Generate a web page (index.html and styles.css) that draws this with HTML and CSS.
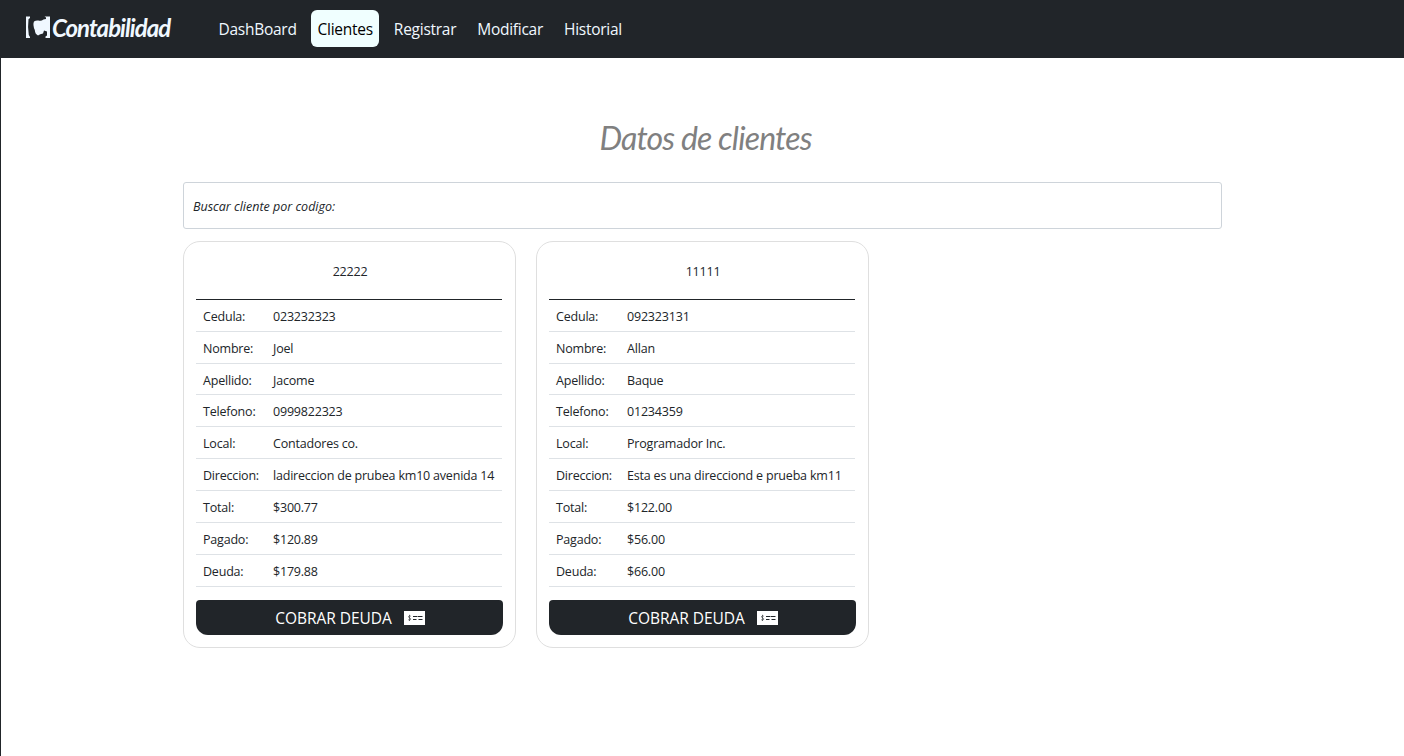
FILE: index.html
```html
<!DOCTYPE html>
<html lang="es">
<head>
<meta charset="utf-8">
<title>Contabilidad</title>
<link rel="stylesheet" href="styles.css">
</head>
<body>
<header class="navbar">
  <a class="brand">
    <svg class="brand-icon" width="26" height="23" viewBox="0 0 26 23" fill="currentColor">
      <path d="M1 .5H5V2L3.500 3.300Q2.500 11 3.800 19L5 21V22H1Z"/>
      <path d="M9 5.500Q11 4 13.500 4.500Q16 5.500 18.500 3.500L21 3V1.500L19.500 .5H25V22H20.500V20.500L22 19.500V15.500L19 14.500L18 17.500Q15 18 13 19.500Q10 18 9.800 14Q7.500 9 9 5.500Z"/>
    </svg>
    <span class="brand-name">Contabilidad</span>
  </a>
  <nav class="nav">
    <a class="nav-link">DashBoard</a>
    <a class="nav-link active">Clientes</a>
    <a class="nav-link">Registrar</a>
    <a class="nav-link">Modificar</a>
    <a class="nav-link">Historial</a>
  </nav>
</header>
<main class="container">
  <h1 class="title">Datos de clientes</h1>
  <div class="search">Buscar cliente por codigo:</div>
  <div class="cards">
    <section class="card">
      <div class="code">22222</div>
      <dl class="rows">
        <div class="row"><dt>Cedula:</dt><dd>023232323</dd></div>
        <div class="row"><dt>Nombre:</dt><dd>Joel</dd></div>
        <div class="row"><dt>Apellido:</dt><dd>Jacome</dd></div>
        <div class="row"><dt>Telefono:</dt><dd>0999822323</dd></div>
        <div class="row"><dt>Local:</dt><dd>Contadores co.</dd></div>
        <div class="row"><dt>Direccion:</dt><dd>ladireccion de prubea km10 avenida 14</dd></div>
        <div class="row"><dt>Total:</dt><dd>$300.77</dd></div>
        <div class="row"><dt>Pagado:</dt><dd>$120.89</dd></div>
        <div class="row"><dt>Deuda:</dt><dd>$179.88</dd></div>
      </dl>
      <button class="pay"><span>COBRAR DEUDA</span>
        <svg width="21" height="14" viewBox="0 0 21 14"><path fill="#fff" d="M0 0H21V14H0Z"/><path d="M6.800 5.200Q5 4.200 4.500 5.500Q4.400 6.500 5.700 6.900Q7 7.500 6.600 8.500Q5.800 9.600 4.200 8.700M5.500 3.800V10" fill="none" stroke="#212529" stroke-width=".6"/><path d="M9 5.500H13.500M14 5.500H18.500M9 8.500H12.500M14.500 8.500H18.500" stroke="#212529"/></svg>
      </button>
    </section>
    <section class="card">
      <div class="code">11111</div>
      <dl class="rows rows-wide">
        <div class="row"><dt>Cedula:</dt><dd>092323131</dd></div>
        <div class="row"><dt>Nombre:</dt><dd>Allan</dd></div>
        <div class="row"><dt>Apellido:</dt><dd>Baque</dd></div>
        <div class="row"><dt>Telefono:</dt><dd>01234359</dd></div>
        <div class="row"><dt>Local:</dt><dd>Programador Inc.</dd></div>
        <div class="row"><dt>Direccion:</dt><dd>Esta es una direcciond e prueba km11</dd></div>
        <div class="row"><dt>Total:</dt><dd>$122.00</dd></div>
        <div class="row"><dt>Pagado:</dt><dd>$56.00</dd></div>
        <div class="row"><dt>Deuda:</dt><dd>$66.00</dd></div>
      </dl>
      <button class="pay"><span>COBRAR DEUDA</span>
        <svg width="21" height="14" viewBox="0 0 21 14"><path fill="#fff" d="M0 0H21V14H0Z"/><path d="M6.800 5.200Q5 4.200 4.500 5.500Q4.400 6.500 5.700 6.900Q7 7.500 6.600 8.500Q5.800 9.600 4.200 8.700M5.500 3.800V10" fill="none" stroke="#212529" stroke-width=".6"/><path d="M9 5.500H13.500M14 5.500H18.500M9 8.500H12.500M14.500 8.500H18.500" stroke="#212529"/></svg>
      </button>
    </section>
  </div>
</main>
</body>
</html>
```
FILE: styles.css
```css
* { box-sizing: border-box; }
body {
  margin: 0;
  height: 756px;
  overflow: hidden;
  border-left: 1px solid #212529;
  background: #fff;
  color: #212529;
  font-family: "Open Sans", "Noto Sans", sans-serif;
}
.navbar {
  display: flex;
  align-items: center;
  height: 58px;
  padding: 0 0 2px 24px;
  background: #212529;
  color: #f0f8ff;
}
.brand { display: flex; align-items: center; width: 187px; }
.brand-icon { flex: none; margin-top: -1px; }
.brand-name {
  font: italic 700 24px/30px Lato, sans-serif;
  letter-spacing: -0.950px;
  white-space: nowrap;
  margin: -1px 0 0 1px;
}
.nav { display: flex; gap: 8px; }
.nav-link {
  height: 37px;
  padding: 0 6.500px;
  border-radius: 6px;
  font-size: 15.500px;
  letter-spacing: -0.270px;
  line-height: 39px;
}
.active { background: #f0ffff; color: #000; }
.container { width: 1039px; margin-left: 182px; }
.title {
  margin: 0;
  padding: 60px 0 0 6px;
  height: 124px;
  text-align: center;
  color: #808080;
  font: italic 400 32px/40px Lato, sans-serif;
  letter-spacing: -0.850px;
}
.search {
  height: 47px;
  padding-left: 9px;
  border: 1px solid #ced4da;
  border-radius: 3px;
  font-size: 12.500px;
  font-style: italic;
  line-height: 47px;
}
.cards { display: flex; gap: 20px; margin-top: 12px; }
.card {
  width: 333px;
  height: 407px;
  padding: 0 12px;
  border: 1px solid #dfdfdf;
  border-radius: 17px;
  font-size: 12.500px;
  letter-spacing: -0.200px;
}
.code {
  width: 306px;
  height: 58px;
  padding: 1px 0 0 2px;
  border-bottom: 1px solid #212529;
  text-align: center;
  line-height: 58px;
}
.rows { width: 306px; margin: 0; }
.row {
  display: grid;
  grid-template-columns: 70px 1fr;
  height: 32px;
  padding-left: 7px;
  border-bottom: 1px solid #dee2e6;
  line-height: 34px;
  white-space: nowrap;
}
.rows-wide .row { grid-template-columns: 71px 1fr; }
.rows-wide dd { letter-spacing: -0.190px; }
.row:nth-child(3) { height: 31px; }
.row dt, .row dd { margin: 0; }
.pay {
  display: flex;
  align-items: center;
  justify-content: center;
  gap: 12.500px;
  width: 307px;
  height: 35px;
  margin-top: 13px;
  padding: 0 0 0 1.500px;
  border: 0;
  border-radius: 4px 4px 12px 12px;
  background: #212529;
  color: #fff;
  font: 15.500px "Open Sans", "Noto Sans", sans-serif;
  letter-spacing: -0.050px;
}
```
